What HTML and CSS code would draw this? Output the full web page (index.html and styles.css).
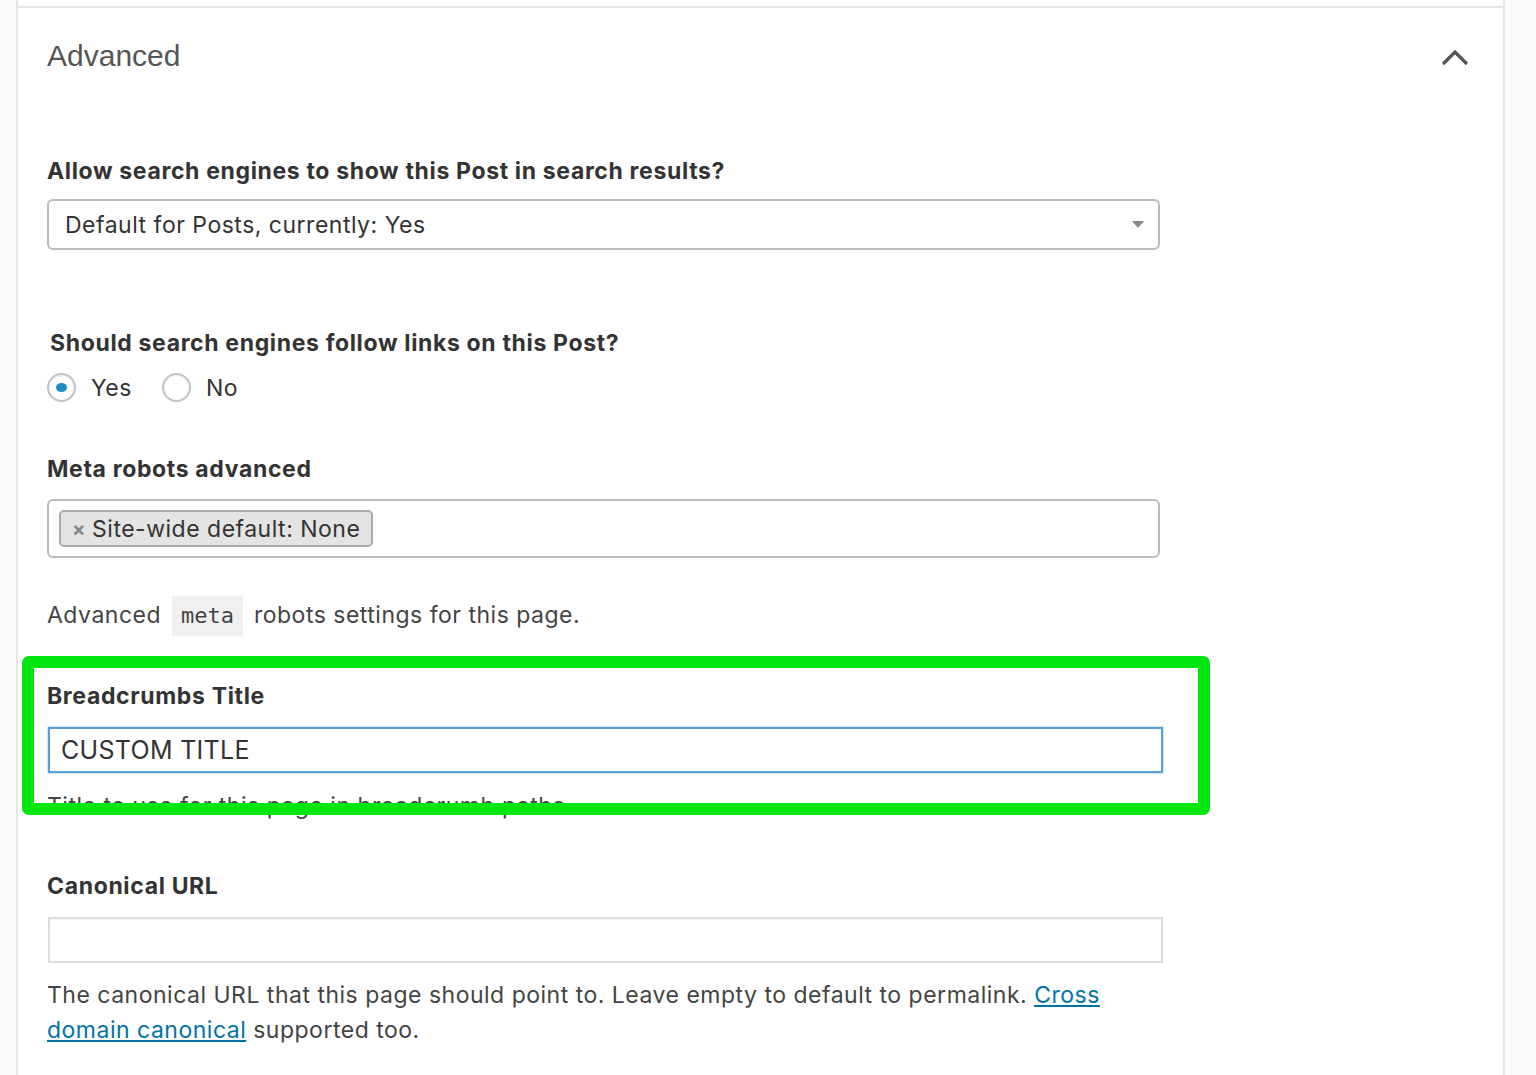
FILE: index.html
```html
<!DOCTYPE html>
<html lang="en">
<head>
    <meta charset="UTF-8">
    <meta name="viewport" content="width=device-width, initial-scale=1.0">
    <title>Advanced</title>
    <link rel="stylesheet" href="styles.css">
</head>
<body>
    <div class="panel">
        <div class="panel-top"></div>
        <div class="panel-head">
            <h2>Advanced</h2>
            <svg class="chevron" width="28" height="18" viewBox="0 0 28 18">
                <path d="M2 16 L14 4 L26 16" fill="none" stroke="#555" stroke-width="3.2"/>
            </svg>
        </div>

        <div class="panel-body">
            <div class="field field-index">
                <label class="label">Allow search engines to show this Post in search results?</label>
                <div class="select">
                    <span>Default for Posts, currently: Yes</span>
                    <span class="arrow"></span>
                </div>
            </div>

            <div class="field field-follow">
                <label class="label label-indent">Should search engines follow links on this Post?</label>
                <div class="radios">
                    <span class="radio checked"></span><span class="radio-text">Yes</span>
                    <span class="radio"></span><span class="radio-text">No</span>
                </div>
            </div>

            <div class="field field-robots">
                <label class="label">Meta robots advanced</label>
                <div class="multi">
                    <span class="tag"><span class="tag-x">×</span>Site-wide default: None</span>
                </div>
                <p class="desc">Advanced <code>meta</code> robots settings for this page.</p>
            </div>

            <div class="field field-crumbs">
                <label class="label">Breadcrumbs Title</label>
                <div class="input input-focus">CUSTOM TITLE</div>
                <p class="desc desc-tight">Title to use for this page in breadcrumb paths.</p>
                <div class="highlight"></div>
            </div>

            <div class="field field-canonical">
                <label class="label">Canonical URL</label>
                <div class="input input-empty"></div>
                <p class="desc desc-lines">The canonical URL that this page should point to. Leave empty to default to permalink. <a href="#">Cross domain canonical</a> supported too.</p>
            </div>
        </div>
    </div>
</body>
</html>
```

FILE: styles.css
```css
body {
    margin: 0;
    padding: 0;
    background-color: #fbfbfb;
    font-family: Inter, "Liberation Sans", Arial, sans-serif;
    color: #444;
}
.panel {
    margin-left: 16px;
    width: 1485px;
    min-height: 1075px;
    background-color: #fff;
    border-left: 2px solid #e6e6e6;
    border-right: 2px solid #e6e6e6;
}
.panel-top {
    height: 6px;
    border-bottom: 2px solid #e4e4e4;
}
.panel-head {
    display: flex;
    justify-content: space-between;
    align-items: center;
    padding: 30px 34px 0 29px;
    height: 36px;
}
.panel-head h2 {
    margin: 0;
    font-family: "Liberation Sans", Arial, sans-serif;
    font-size: 30px;
    font-weight: normal;
    color: #555;
}
.chevron {
    display: block;
    margin-top: 2px;
}
.panel-body {
    padding: 0 0 0 29px;
}
.field {
    position: relative;
    width: 1115px;
}
.label {
    display: block;
    font-size: 23px;
    line-height: 26px;
    font-weight: 700;
    letter-spacing: 0.65px;
    color: #333;
}
.label-indent {
    padding-left: 3px;
}
.field-index {
    padding-top: 84px;
}
.select {
    display: flex;
    justify-content: space-between;
    align-items: center;
    box-sizing: border-box;
    margin-top: 15px;
    width: 1113px;
    height: 51px;
    padding: 0 14px 0 16px;
    border: 2px solid #bbb;
    border-radius: 6px;
    font-size: 23px;
    letter-spacing: 0.5px;
    color: #333;
}
.arrow {
    width: 0;
    height: 0;
    border-left: 6px solid transparent;
    border-right: 6px solid transparent;
    border-top: 7px solid #888;
}
.field-follow {
    padding-top: 80px;
}
.radios {
    display: flex;
    align-items: center;
    margin-top: 17px;
    font-size: 23px;
    letter-spacing: 0.5px;
    color: #333;
}
.radio {
    box-sizing: border-box;
    width: 29px;
    height: 29px;
    border: 2px solid #c4c4c4;
    border-radius: 50%;
    box-shadow: inset 0 1px 2px rgba(0, 0, 0, 0.08);
    position: relative;
}
.radio.checked::after {
    content: "";
    position: absolute;
    left: 7px;
    top: 8px;
    width: 11px;
    height: 9px;
    border-radius: 50%;
    background-color: #1e8cbe;
}
.radio-text {
    margin: 0 30px 0 15px;
}
.field-robots {
    padding-top: 54px;
}
.multi {
    box-sizing: border-box;
    margin-top: 17px;
    width: 1113px;
    height: 59px;
    padding: 9px 10px;
    border: 2px solid #bbb;
    border-radius: 6px;
}
.tag {
    display: inline-flex;
    align-items: center;
    box-sizing: border-box;
    height: 37px;
    padding: 0 11px 0 11px;
    background-color: #e4e4e4;
    border: 2px solid #aaa;
    border-radius: 5px;
    font-size: 23px;
    letter-spacing: 0.5px;
    color: #333;
}
.tag-x {
    margin-right: 6px;
    color: #888;
    font-weight: bold;
    font-size: 20px;
}
.desc {
    margin: 0;
    font-size: 23px;
    line-height: 35px;
    letter-spacing: 0.5px;
    color: #444;
}
.field-robots .desc {
    margin-top: 38px;
}
code {
    display: inline-block;
    padding: 2px 9px;
    margin: 0 4px;
    background-color: #f0f0f0;
    font-family: "DejaVu Sans Mono", monospace;
    font-size: 22px;
    letter-spacing: 0;
    line-height: 36px;
}
.field-crumbs {
    padding-top: 47px;
}
.input {
    box-sizing: border-box;
    margin-top: 18px;
    margin-left: 1px;
    width: 1115px;
    height: 46px;
    padding: 0 11px;
    font-size: 25px;
    line-height: 42px;
    letter-spacing: 0.3px;
    color: #333;
}
.input-focus {
    border: 2px solid #5b9dd9;
    box-shadow: 0 0 2px rgba(30, 140, 190, 0.6);
}
.input-empty {
    border: 2px solid #ddd;
    box-shadow: inset 0 1px 2px rgba(0, 0, 0, 0.05);
}
.desc-tight {
    margin-top: 16px;
}
.highlight {
    position: absolute;
    left: -25px;
    top: 20px;
    width: 1188px;
    height: 159px;
    box-sizing: border-box;
    border: 12px solid #00e60e;
    border-radius: 7px;
}
.field-canonical {
    padding-top: 49px;
}
.desc-lines {
    margin-top: 15px;
}
a {
    color: #0073aa;
}
```
